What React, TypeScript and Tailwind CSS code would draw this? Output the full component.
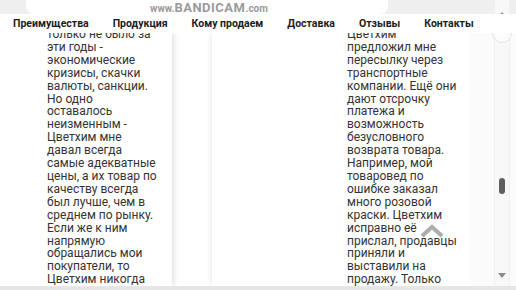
const navItems = ["Преимущества", "Продукция", "Кому продаем", "Доставка", "Отзывы", "Контакты"];

const leftLines = [
  "только не было за",
  "эти годы -",
  "экономические",
  "кризисы, скачки",
  "валюты, санкции.",
  "Но одно",
  "оставалось",
  "неизменным -",
  "Цветхим мне",
  "давал всегда",
  "самые адекватные",
  "цены, а их товар по",
  "качеству всегда",
  "был лучше, чем в",
  "среднем по рынку.",
  "Если же к ним",
  "напрямую",
  "обращались мои",
  "покупатели, то",
  "Цветхим никогда",
];

const rightLines = [
  "Цветхим",
  "предложил мне",
  "пересылку через",
  "транспортные",
  "компании. Ещё они",
  "дают отсрочку",
  "платежа и",
  "возможность",
  "безусловного",
  "возврата товара.",
  "Например, мой",
  "товаровед по",
  "ошибке заказал",
  "много розовой",
  "краски. Цветхим",
  "исправно её",
  "прислал, продавцы",
  "приняли и",
  "выставили на",
  "продажу. Только",
];

function Lines({ lines }: { lines: string[] }) {
  return (
    <div className="-mt-[5px] text-[12px] leading-[12.9px] text-[#333]">
      {lines.map((line, index) => (
        <div key={index} className="whitespace-nowrap">
          {line}
        </div>
      ))}
    </div>
  );
}

export default function App() {
  return (
    <div
      className="relative w-[516px] h-[290px] overflow-hidden bg-white flex flex-col"
      style={{ fontFamily: "Roboto, 'Noto Sans', sans-serif" }}
    >
      {/* watermark strip */}
      <div className="h-[14px] bg-[#efefef] flex shrink-0">
        <div className="ml-[26px] w-[362px] h-full bg-white rounded-b-[8px] flex justify-center items-center">
          <span className="text-[#9a9a9a] font-bold leading-none pl-[4px]">
            <span className="text-[10px]">www.</span>
            <span className="text-[13px] tracking-[0.5px]">BANDICAM</span>
            <span className="text-[10px]">.com</span>
          </span>
        </div>
      </div>

      {/* nav */}
      <div className="h-[19px] shrink-0 bg-white flex items-center gap-[24px] pl-[13px] relative z-10">
        {navItems.map((item) => (
          <div key={item} className="text-[10.5px] font-bold text-[#1c1c1c] whitespace-nowrap">
            {item}
          </div>
        ))}
      </div>

      {/* cards */}
      <div className="flex-1 flex overflow-hidden">
        <div className="w-[172px] shrink-0 bg-white shadow-[2px_0_6px_rgba(0,0,0,0.12)] pl-[47px]">
          <Lines lines={leftLines} />
        </div>
        <div className="w-[258px] shrink-0 ml-[40px] bg-white shadow-[0_0_6px_rgba(0,0,0,0.12)] pl-[135px]">
          <Lines lines={rightLines} />
        </div>
        <div className="flex-1 bg-[#fbfbfb]" />
      </div>

      <div className="h-[4px] shrink-0 bg-[#e6e6e6]" />

      {/* scroll-to-top chevron */}
      <svg className="absolute left-[420px] top-[224px]" width="24" height="14" viewBox="0 0 24 14">
        <polyline points="2,12 12,3 22,12" fill="none" stroke="#9e9e9e" strokeWidth="4" opacity="0.85" />
      </svg>

      {/* scrollbar */}
      <div className="absolute right-[6px] top-0 bottom-[4px] w-[16px] bg-[#f8f8f8] border-x border-[#f0f0f0] flex flex-col items-center">
        <div className="mt-[12px] w-0 h-0 border-x-[4px] border-x-transparent border-b-[5px] border-b-[#8c8c8c]" />
        <div className="mt-[6px] w-[20px] h-[20px] rounded-full border border-[#e4e4e4] bg-white/60" />
        <div className="mt-[135px] w-[6px] h-[16px] rounded-full bg-[#5f5f5f]" />
        <div className="mt-auto mb-[8px] w-0 h-0 border-x-[4px] border-x-transparent border-t-[5px] border-t-[#8c8c8c]" />
      </div>
    </div>
  );
}
